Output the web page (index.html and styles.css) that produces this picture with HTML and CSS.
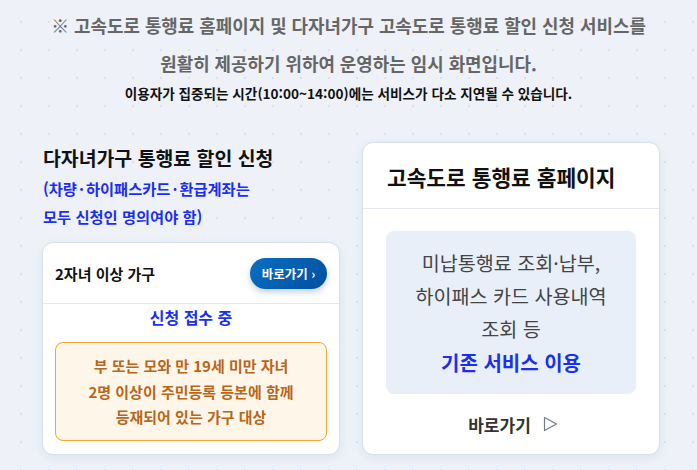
FILE: index.html
```html
<!DOCTYPE html>
<html lang="ko">
<head>
<meta charset="utf-8">
<title>안내</title>
<link rel="stylesheet" href="styles.css">
</head>
<body>
<div class="page">
  <header class="notice">
    <p class="notice-main">※ 고속도로 통행료 홈페이지 및 다자녀가구 고속도로 통행료 할인 신청 서비스를<br>원활히 제공하기 위하여 운영하는 임시 화면입니다.</p>
    <p class="notice-sub">이용자가 집중되는 시간(10:00~14:00)에는 서비스가 다소 지연될 수 있습니다.</p>
  </header>
  <main class="columns">
    <section class="col-left">
      <h2 class="sec-title">다자녀가구 통행료 할인 신청</h2>
      <p class="sec-note">(차량<span class="dot">·</span>하이패스카드<span class="dot">·</span>환급계좌는<br>모두 신청인 명의여야 함)</p>
      <div class="card apply-card">
        <div class="apply-head">
          <span class="apply-title">2자녀 이상 가구</span>
          <a class="pill-btn" href="#">바로가기 ›</a>
        </div>
        <p class="status">신청 접수 중</p>
        <div class="cond-box">부 또는 모와 만 19세 미만 자녀<br>2명 이상이 주민등록 등본에 함께<br>등재되어 있는 가구 대상</div>
      </div>
    </section>
    <section class="card home-card">
      <h2 class="home-title">고속도로 통행료 홈페이지</h2>
      <div class="home-body">
        <div class="info-box">
          <p class="info-text">미납통행료 조회·납부,<br>하이패스 카드 사용내역<br>조회 등</p>
          <p class="info-strong">기존 서비스 이용</p>
        </div>
        <a class="go-link" href="#">바로가기
          <svg class="tri" width="15" height="16" viewBox="0 0 15 16"><path d="M1.5 1.5 L13.5 8 L1.5 14.5 Z" fill="none" stroke="#6f7b95" stroke-width="1.2" stroke-linejoin="round"/></svg>
        </a>
      </div>
    </section>
  </main>
</div>
</body>
</html>
```

FILE: styles.css
```css
* { box-sizing: border-box; }
html, body { margin: 0; padding: 0; }
body {
  font-family: "Noto Sans CJK KR", "Noto Sans", sans-serif;
  background-color: #eef2f8;
  background-image: radial-gradient(circle, #d6e1f2 1px, transparent 1.3px);
  background-size: 28px 28px;
  background-position: 7px 8px;
  height: 470px;
  overflow: hidden;
}
.page { padding: 6px 0 0; }
.notice { text-align: center; }
.notice-main {
  margin: 0;
  font-size: 17.9px;
  line-height: 38px;
  font-weight: 700;
  color: #666;
}
.notice-sub {
  margin: 0;
  font-size: 13.6px;
  line-height: 22px;
  font-weight: 700;
  color: #111;
}
.columns {
  display: flex;
  gap: 22px;
  padding: 38px 0 0 42px;
  align-items: flex-start;
}
.col-left { width: 298px; padding-top: 2px; }
.sec-title {
  margin: 0 0 0 1px;
  font-size: 19.4px;
  line-height: 28px;
  font-weight: 700;
  color: #111;
}
.sec-note {
  margin: 2px 0 0 1px;
  font-size: 15.3px;
  line-height: 28px;
  font-weight: 700;
  color: #1a2ff0;
}
.dot { margin: 0 2px; }
.card {
  background: #fff;
  border: 1px solid #d9e0ee;
  border-radius: 11px;
  box-shadow: 0 3px 10px rgba(120, 140, 180, 0.14);
}
.apply-card {
  margin-top: 12px;
  height: 213px;
  padding: 0 0 15px;
}
.apply-head {
  height: 61px;
  display: flex;
  align-items: center;
  justify-content: space-between;
  padding: 0 12px 0 12px;
  border-bottom: 1px solid #e3e8f2;
}
.apply-title {
  font-size: 15px;
  font-weight: 700;
  color: #111;
}
.pill-btn {
  display: inline-flex;
  align-items: center;
  justify-content: center;
  width: 77px;
  height: 31px;
  border-radius: 16px;
  background: linear-gradient(135deg, #0a6fc4, #004f9c);
  color: #fff;
  font-size: 12.5px;
  font-weight: 700;
  text-decoration: none;
  box-shadow: 0 3px 6px rgba(0, 70, 150, 0.25);
  margin-top: 1px;
}
.status {
  margin: 0;
  text-align: center;
  font-size: 16px;
  line-height: 27px;
  font-weight: 700;
  color: #1a2ff0;
}
.cond-box {
  margin: 11px 12px 0;
  height: 99px;
  padding-top: 10px;
  border: 1px solid #f2a530;
  border-radius: 8px;
  background: #fff6ea;
  color: #b8661a;
  text-align: center;
  font-size: 15px;
  line-height: 25.5px;
  font-weight: 700;
}
.home-card {
  width: 298px;
  height: 313px;
}
.home-title {
  margin: 0;
  height: 66px;
  display: flex;
  align-items: center;
  padding: 2px 24px 0;
  font-size: 21.4px;
  font-weight: 700;
  color: #111;
  border-bottom: 1px solid #e3e8f2;
}
.home-body { padding: 22px 23px 0; }
.info-box {
  background: #e8eff8;
  border-radius: 8px;
  height: 163px;
  padding-top: 15px;
  text-align: center;
}
.info-text {
  margin: 0;
  font-size: 19.6px;
  line-height: 33px;
  color: #444;
}
.info-strong {
  margin: 0;
  font-size: 20px;
  line-height: 36px;
  font-weight: 700;
  color: #1a2ff0;
}
.go-link {
  display: flex;
  align-items: center;
  justify-content: center;
  gap: 12px;
  height: 30px;
  margin-top: 15px;
  padding-left: 4px;
  font-size: 17px;
  font-weight: 700;
  color: #333;
  text-decoration: none;
}
.tri { display: block; }
```
